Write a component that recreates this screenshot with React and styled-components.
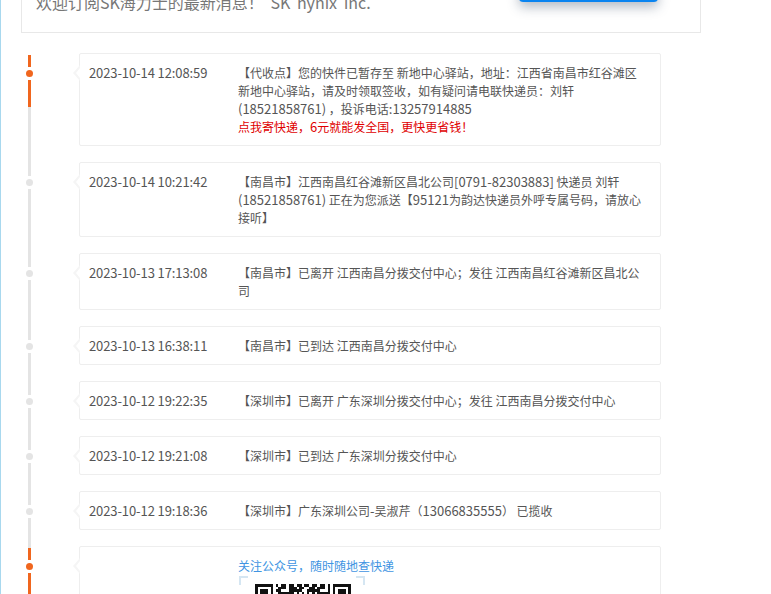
import React from "react";
import styled, { createGlobalStyle } from "styled-components";

const GlobalStyle = createGlobalStyle`
  html, body {
    margin: 0;
    padding: 0;
    height: 100%;
    overflow: hidden;
    background: #fff;
  }
  * {
    box-sizing: border-box;
  }
`;

const Page = styled.div`
  height: 594px;
  overflow: hidden;
  border-left: 1px solid #a8d8ee;
  font-family: "Noto Sans CJK SC", "Noto Sans", sans-serif;
  color: #555;
`;

const Banner = styled.div`
  width: 680px;
  height: 60px;
  margin: -27px 0 0 20px;
  padding: 0 42px 0 14px;
  border: 1px solid #e8e8e8;
  border-top: 0;
  display: flex;
  justify-content: space-between;
`;

const BannerText = styled.p`
  margin: 17px 0 0;
  font-size: 16px;
  line-height: 24px;
  color: #777;
  word-spacing: 3px;
`;

const BannerButton = styled.div`
  width: 139px;
  height: 29px;
  background: #0a84f0;
  border-radius: 0 0 4px 4px;
  box-shadow: 0 5px 12px rgba(40, 60, 90, 0.35);
`;

const Timeline = styled.ul`
  list-style: none;
  margin: 20px 0 0;
  padding: 0 0 0 23px;
`;

const Row = styled.li`
  display: flex;
`;

const Rail = styled.div`
  width: 11px;
  margin-right: 44px;
  display: flex;
  flex-direction: column;
  align-items: center;
`;

const Segment = styled.span`
  width: 3px;
  background: ${(p) => p.$color};
  height: ${(p) => (p.$h ? `${p.$h}px` : "auto")};
  flex: ${(p) => (p.$h ? "none" : 1)};
`;

const Dot = styled.span`
  width: 7px;
  height: 7px;
  margin: 3px 0;
  flex: none;
  border-radius: 50%;
  background: ${(p) => p.$color};
`;

const Card = styled.div`
  position: relative;
  width: 582px;
  margin-bottom: 16px;
  padding: 10px 15px 9px 9px;
  border: 1px solid #eee;
  border-radius: 2px;
  display: flex;
  font-size: 12px;
  line-height: 18px;
`;

const Notch = styled.svg`
  position: absolute;
  left: -7px;
  top: 11px;
`;

const Time = styled.div`
  width: 149px;
  flex: none;
  font-size: 13px;
  letter-spacing: -0.1px;
`;

const Detail = styled.div`
  flex: 1;
`;

const Latin = styled.span`
  font-size: 13px;
  line-height: 1;
`;

const Promo = styled.div`
  color: #e00000;
`;

const FollowTitle = styled.div`
  color: #4094e2;
`;

const QrFrame = styled.div`
  position: relative;
  width: 126px;
  height: 120px;
  margin: 1px 0 0 1px;
  padding: 7px 16px;
`;

const Corner = styled.span`
  position: absolute;
  top: 0;
  width: 9px;
  height: 9px;
  border-top: 2px solid #d5e6f2;
  ${(p) => (p.$right ? "right: 0; border-right: 2px solid #d5e6f2;" : "left: 0; border-left: 2px solid #d5e6f2;")}
`;

const ORANGE = "#f0661e";
const GRAY = "#e4e4e4";

const events = [
  {
    time: "2023-10-14 12:08:59",
    text: "【代收点】您的快件已暂存至 新地中心驿站，地址：江西省南昌市红谷滩区新地中心驿站，请及时领取签收，如有疑问请电联快递员：刘轩(18521858761) ，投诉电话:13257914885",
    promo: "点我寄快递，6元就能发全国，更快更省钱！",
    first: true,
  },
  {
    time: "2023-10-14 10:21:42",
    text: "【南昌市】江西南昌红谷滩新区昌北公司[0791-82303883] 快递员 刘轩(18521858761) 正在为您派送【95121为韵达快递员外呼专属号码，请放心接听】",
  },
  {
    time: "2023-10-13 17:13:08",
    text: "【南昌市】已离开 江西南昌分拨交付中心；发往 江西南昌红谷滩新区昌北公司",
  },
  { time: "2023-10-13 16:38:11", text: "【南昌市】已到达 江西南昌分拨交付中心" },
  {
    time: "2023-10-12 19:22:35",
    text: "【深圳市】已离开 广东深圳分拨交付中心；发往 江西南昌分拨交付中心",
  },
  { time: "2023-10-12 19:21:08", text: "【深圳市】已到达 广东深圳分拨交付中心" },
  { time: "2023-10-12 19:18:36", text: "【深圳市】广东深圳公司-吴淑芹（13066835555） 已揽收" },
];

// the original font sets latin wider than the cjk text around it
function Mixed({ children }) {
  return children.split(/([0-9A-Za-z[\]().:-]+)/).map((part, i) => (i % 2 ? <Latin key={i}>{part}</Latin> : part));
}

function CardNotch() {
  return (
    <Notch width="7" height="16" viewBox="0 0 7 16">
      <path d="M7 0 L0 8 L7 16 Z" fill="#f5f5f5" />
      <path d="M7 3 L3 8 L7 13 Z" fill="#fff" />
    </Notch>
  );
}

function QrCode() {
  const size = 37;
  const cells = [];
  for (let y = 0; y < 5; y++) {
    for (let x = 0; x < size; x++) {
      const inFinder = x < 7 || x >= size - 7;
      let on;
      if (inFinder) {
        const fx = x < 7 ? x : x - (size - 7);
        on = y === 0 || fx === 0 || fx === 6 || (fx >= 2 && fx <= 4 && y >= 2);
      } else if (x === 7 || x === size - 8) {
        on = false;
      } else {
        on = (x * 7 + y * 13 + ((x * y) % 5)) % 3 !== 0;
      }
      if (on) cells.push(<rect key={`${x}-${y}`} x={x} y={y} width="1" height="1" fill="#111" />);
    }
  }
  return (
    <svg width="96" height="13" viewBox="0 0 37 5" preserveAspectRatio="none" shapeRendering="crispEdges">
      {cells}
    </svg>
  );
}

export default function App() {
  return (
    <>
      <GlobalStyle />
      <Page>
        <Banner>
          <BannerText>欢迎订阅SK海力士的最新消息！ SK hynix Inc.</BannerText>
          <BannerButton />
        </Banner>
        <Timeline>
          {events.map((e) => (
            <Row key={e.time}>
              <Rail>
                {e.first ? <Segment $h={2} $color="transparent" /> : null}
                <Segment $h={e.first ? 12 : 14} $color={e.first ? ORANGE : GRAY} />
                <Dot $color={e.first ? ORANGE : GRAY} />
                {e.first ? <Segment $h={27} $color={ORANGE} /> : null}
                <Segment $color={GRAY} />
              </Rail>
              <Card>
                <CardNotch />
                <Time>{e.time}</Time>
                <Detail>
                  <Mixed>{e.text}</Mixed>
                  {e.promo ? <Promo><Mixed>{e.promo}</Mixed></Promo> : null}
                </Detail>
              </Card>
            </Row>
          ))}
          <Row>
            <Rail>
              <Segment $h={2} $color={GRAY} />
              <Segment $h={12} $color={ORANGE} />
              <Dot $color={ORANGE} />
              <Segment $color={ORANGE} />
            </Rail>
            <Card>
              <CardNotch />
              <Time />
              <Detail>
                <FollowTitle>关注公众号，随时随地查快递</FollowTitle>
                <QrFrame>
                  <Corner />
                  <Corner $right />
                  <QrCode />
                </QrFrame>
              </Detail>
            </Card>
          </Row>
        </Timeline>
      </Page>
    </>
  );
}
